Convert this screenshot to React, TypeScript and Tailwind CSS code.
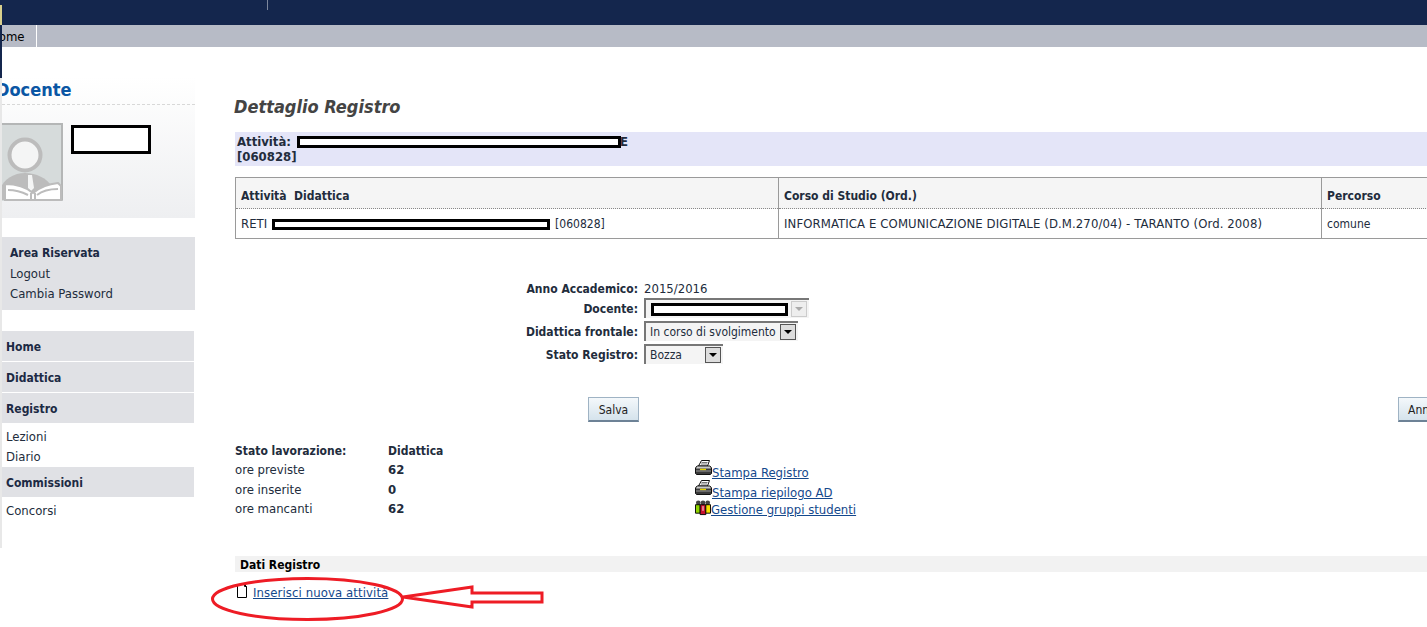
import React from 'react';

const PrinterIcon = () => (
  <svg width="17" height="16" viewBox="0 0 17 16" className="shrink-0">
    <path d="M6.500 .5h8l-2 5.500h-9z" fill="#fff" stroke="#111" />
    <path d="M6.500 2.500h6M6 4h6" stroke="#777" />
    <path d="M2 6h13l1.500 2v5.500l-1 1h-14l-1-1v-5.500z" fill="#3a3a3a" stroke="#111" />
    <path d="M2 6.500h13l1 2h-15z" fill="#c9c9c9" />
    <path d="M5 9.500h6" stroke="#e5d200" strokeWidth="1.500" />
    <path d="M1 11h15" stroke="#9a9a9a" />
  </svg>
);

const GroupIcon = () => (
  <svg width="16" height="16" viewBox="0 0 17 16" className="shrink-0">
    <circle cx="3.500" cy="2.500" r="2.500" fill="#444" />
    <circle cx="8.500" cy="2.500" r="2.500" fill="#444" />
    <circle cx="13.500" cy="2.500" r="2.500" fill="#444" />
    <path d="M.5 4.500h5v9h-5z" fill="#8fd400" stroke="#000" />
    <path d="M5.500 4.500h6v10.500h-6z" fill="#c8102e" stroke="#000" />
    <path d="M11.500 4.500h5v9h-5z" fill="#f6e000" stroke="#000" />
    <path d="M8.500 6v5" stroke="#fff" />
  </svg>
);

const Avatar = () => (
  <svg width="63" height="78" viewBox="0 0 63 78" className="block">
    <rect x="0" y="0" width="63" height="78" fill="#d6dbdb" />
    <path d="M0 1h62v76.500" fill="none" stroke="#b4b6b6" strokeWidth="2" />
    <path d="M0 66c4-10 14-16 25-16s22 5 27 14v13h-52z" fill="#bcbcbc" />
    <circle cx="25" cy="32" r="15.500" fill="#f4f5f5" stroke="#bcbcbc" strokeWidth="4" />
    <path d="M28 52h4l2 13-3 3-3-3z" fill="#f4f5f5" />
    <path d="M5 61c11 0 21 3 28 9 7-6 15-9 25-10l3 3v14h-56z" fill="#fff" stroke="#bcbcbc" strokeWidth="2" />
    <path d="M31 70v8M35 70v8M8 67c8 0 14 2 20 5M58 66c-8 0-16 2-21 6" stroke="#bcbcbc" strokeWidth="2" fill="none" />
  </svg>
);

const MenuHead = ({ label, className = '' }: { label: string; className?: string }) => (
  <div className={`h-[30px] bg-[#e0e1e5] pl-1 text-[12px] leading-[33px] font-bold text-[#1c2a44] ${className}`}>{label}</div>
);

const Select = ({ label, width }: { label: string; width: string }) => (
  <div className={`flex h-[20px] items-center justify-between border-t-2 border-l-2 border-[#777] bg-[#f4f4f4] pr-[2px] text-[12px] ${width}`}>
    <span className="pl-1 whitespace-nowrap">{label}</span>
    <span className="flex h-[16px] w-[16px] items-center justify-center border border-[#555] bg-[#ddd] text-black">
      <span className="h-0 w-0 border-x-[4px] border-t-[4px] border-x-transparent border-t-current" />
    </span>
  </div>
);

const Redacted = ({ className }: { className: string }) => <span className={`inline-block border-[3px] border-black bg-white ${className}`} />;

export default function App() {
  return (
    <div className="relative h-[627px] w-[1427px] overflow-hidden bg-white text-[13px] leading-[20px] text-[#222c3c] [font-family:'DejaVu_Sans_Condensed','DejaVu_Sans',sans-serif]">
      <div className="h-[25px] bg-[#14264d]">
        <div className="ml-[267px] h-[10px] w-px bg-[#7d879d]" />
      </div>
      <div className="flex h-[22px] bg-[#b7bbc6]">
        <div className="w-[37px] overflow-hidden border-r border-white pt-[2px] text-black">
          <span className="-ml-[10px] block">Home</span>
        </div>
      </div>

      <div className="flex pl-[2px]">
        <aside className="w-[193px] shrink-0">
          <div className="mt-[30px] h-[141px] bg-gradient-to-b from-white to-[#eeeff1]">
            <div className="h-[28px] overflow-hidden border-b border-dashed border-[#d8d8d8] text-[18px] leading-[25px] text-[#0a56a4]">
              <span className="-ml-[6px] block font-bold">Docente</span>
            </div>
            <div className="mt-[18px] -ml-[2px] flex items-start">
              <Avatar />
              <div className="mt-[2px] ml-2 h-[29px] w-[80px] border-[3px] border-black bg-white" />
            </div>
          </div>

          <div className="mt-[19px] h-[73px] bg-[#e0e1e5] pt-[6px] pl-2">
            <div className="text-[12px] font-bold text-[#1c2a44]">Area Riservata</div>
            <div className="mt-[1px]">Logout</div>
            <div>Cambia Password</div>
          </div>

          <div className="mt-[21px] w-[192px]">
            <MenuHead label="Home" />
            <MenuHead label="Didattica" className="mt-px" />
            <MenuHead label="Registro" className="mt-px" />
            <div className="pt-[4px] pl-1 leading-[20px]">
              <div>Lezioni</div>
              <div>Diario</div>
            </div>
            <MenuHead label="Commissioni" />
            <div className="pt-[4px] pl-1">Concorsi</div>
          </div>
        </aside>

        <main className="ml-[40px] w-[1300px] shrink-0">
          <h1 className="mt-[47px] -ml-px h-[26px] text-[18px] leading-[26px] font-bold text-[#444] italic">Dettaglio Registro</h1>

          <div className="mt-[12px] h-[34px] bg-[#e4e5f8] pl-[2px] leading-[15px] font-bold">
            <div className="whitespace-nowrap pt-[2px]">
              Attività: <Redacted className="ml-[2px] h-[12px] w-[324px] align-[-2px]" /><span className="-ml-px">E</span>
            </div>
            <div>[060828]</div>
          </div>

          <div className="mt-[11px] flex h-[62px] border border-[#9a9a9a]">
            <div className="w-[543px] border-r border-[#9a9a9a]">
              <div className="h-[31px] border-b border-dotted border-[#888] bg-[#f5f5f5] pl-[5px] text-[12px] leading-[36px] font-bold">Attività&nbsp; Didattica</div>
              <div className="flex h-[29px] items-center pt-px pl-[5px]">
                RETI <Redacted className="mx-[5px] h-[11px] w-[278px]" /> <span className="text-[12px]">[060828]</span>
              </div>
            </div>
            <div className="w-[543px] border-r border-[#9a9a9a]">
              <div className="h-[31px] border-b border-dotted border-[#888] bg-[#f5f5f5] pl-[5px] text-[12px] leading-[36px] font-bold">Corso di Studio (Ord.)</div>
              <div className="flex h-[29px] items-center pt-px pl-[5px] tracking-[0.1px] whitespace-nowrap">INFORMATICA E COMUNICAZIONE DIGITALE (D.M.270/04) - TARANTO (Ord. 2008)</div>
            </div>
            <div className="flex-1">
              <div className="h-[31px] border-b border-dotted border-[#888] bg-[#f5f5f5] pl-[5px] text-[12px] leading-[36px] font-bold">Percorso</div>
              <div className="flex h-[29px] items-center pl-[5px] text-[12px]">comune</div>
            </div>
          </div>

          <div className="mt-[40px] grid grid-cols-[403px_auto] justify-start gap-x-[6px]">
            <div className="h-[19px] text-right text-[12px] font-bold">Anno Accademico:</div>
            <div className="h-[19px]">2015/2016</div>
            <div className="h-[20px] pt-px text-right text-[12px] font-bold">Docente:</div>
            <div className="flex h-[20px] w-[165px] items-center justify-between border-t-2 border-l-2 border-[#777] bg-[#f4f4f4] pr-[2px]">
              <Redacted className="ml-[5px] h-[13px] w-[137px]" />
              <span className="flex h-[16px] w-[16px] items-center justify-center border border-[#ccc] bg-[#eee] text-[#aaa]">
                <span className="h-0 w-0 border-x-[4px] border-t-[4px] border-x-transparent border-t-current" />
              </span>
            </div>
            <div className="mt-[3px] h-[20px] pt-px text-right text-[12px] font-bold">Didattica frontale:</div>
            <div className="mt-[3px]"><Select label="In corso di svolgimento" width="w-[154px]" /></div>
            <div className="mt-[3px] h-[20px] pt-px text-right text-[12px] font-bold">Stato Registro:</div>
            <div className="mt-[3px]"><Select label="Bozza" width="w-[79px]" /></div>
          </div>

          <div className="mt-[33px] flex h-[25px] text-[12px]">
            <button className="ml-[353px] h-[25px] w-[51px] border border-b-2 border-[#9fb3c4] border-b-[#6d8296] bg-gradient-to-b from-[#f4f8fb] to-[#d5e3ec] pt-px text-[#222]">Salva</button>
            <button className="ml-[759px] h-[25px] w-[70px] border border-b-2 border-[#9fb3c4] border-b-[#6d8296] bg-gradient-to-b from-[#f4f8fb] to-[#d5e3ec] pt-px pl-[9px] text-left text-[#222]">Annulla</button>
          </div>

          <div className="mt-[19px] flex">
            <div className="grid h-[90px] w-[460px] grid-cols-[153px_auto] content-start">
              <div className="text-[12px] font-bold">Stato lavorazione:</div>
              <div className="text-[12px] font-bold">Didattica</div>
              <div className="-mt-[1px]">ore previste</div>
              <div className="-mt-[1px] font-bold">62</div>
              <div>ore inserite</div>
              <div className="font-bold">0</div>
              <div className="-mt-[1px]">ore mancanti</div>
              <div className="-mt-[1px] font-bold">62</div>
            </div>
            <div className="pt-[19px] text-[#14488c]">
              <a className="flex h-[20px] items-start underline"><PrinterIcon /><span className="pt-[3px]">Stampa Registro</span></a>
              <a className="flex h-[20px] items-start underline"><PrinterIcon /><span className="pt-[3px]">Stampa riepilogo AD</span></a>
              <a className="flex h-[20px] items-start underline"><GroupIcon /><span>Gestione gruppi studenti</span></a>
            </div>
          </div>

          <div className="mt-[25px] h-[16px] bg-[#f2f2f2] pl-[5px] text-[12px] leading-[18px] font-bold text-black">Dati Registro</div>
          <a className="mt-[11px] flex items-center text-[#14488c] underline">
            <svg width="16" height="14" viewBox="0 0 16 14" className="-mt-[4px] shrink-0">
              <path d="M2.500 .5h7l2 2v11h-9z" fill="#fff" stroke="#000" />
              <path d="M9.500 .5v2h2" fill="none" stroke="#000" />
            </svg>
            <span className="ml-[2px] tracking-[0.1px]">Inserisci nuova attività</span>
          </a>
        </main>
      </div>

      {/* strip left over from the screenshot crop */}
      <div className="absolute top-0 left-0 h-[548px] w-[2px] bg-[#e8e8e8]">
        <div className="h-[78px] bg-[#14264d]">
          <div className="h-[5px]" />
          <div className="h-[20px] bg-[#d8cf8c]" />
        </div>
      </div>

      {/* hand-drawn red annotation */}
      <svg className="absolute top-[570px] left-[205px]" width="345" height="57" viewBox="0 0 345 57">
        <ellipse cx="102.500" cy="29" rx="95" ry="20.500" fill="none" stroke="#ee1c25" strokeWidth="3" />
        <path d="M198 27L267 17v6h70v9h-70v5z" fill="none" stroke="#ee1c25" strokeWidth="3" />
      </svg>
    </div>
  );
}
